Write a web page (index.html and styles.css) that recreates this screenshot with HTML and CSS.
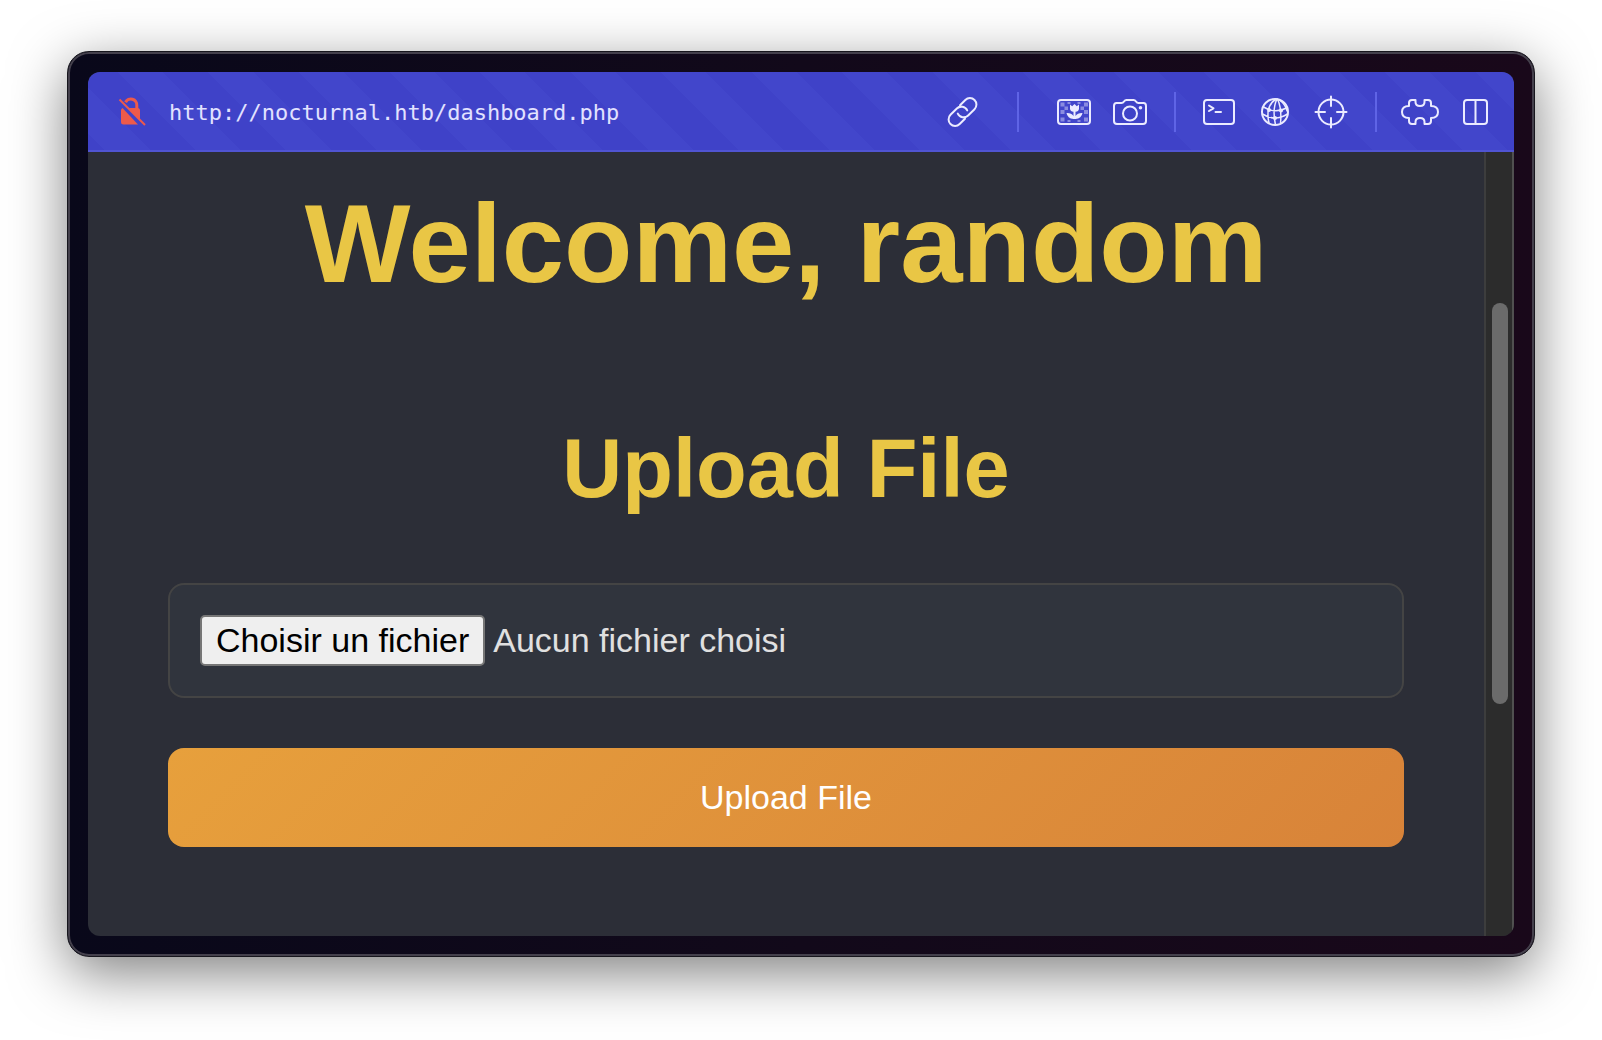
FILE: index.html
```
<!DOCTYPE html>
<html lang="fr">
<head>
<meta charset="utf-8">
<meta name="viewport" content="width=device-width, initial-scale=1">
<title>Dashboard</title>
<link rel="stylesheet" href="styles.css">
</head>
<body>
<div class="frame">
  <div class="window">
    <header class="toolbar">
      <svg class="lock" viewBox="0 0 32 32" aria-hidden="true">
        <path class="lock-shackle" d="M9.500 6.200A6 6 0 0 1 20.800 9.500V15"/>
        <path class="lock-body" d="M6.500 12L22 28.500H7.500Q5 28.500 5 26V14.500Q5 12.500 6.500 12Z"/>
        <path class="lock-body" d="M12 12H21.500Q24 12 24 14.500V24.500Z"/>
        <path class="lock-slash" d="M3.500 3.500L29 29"/>
      </svg>
      <a class="url" href="#">http://nocturnal.htb/dashboard.php</a>
      <nav class="tools" aria-label="Tools">
        <button class="tool" type="button" aria-label="Copy link">
          <svg viewBox="0 0 40 40">
            <g transform="translate(20.500 20) rotate(-45)">
              <path d="M-3 6.500H-10.500A6.500 6.500 0 0 1 -10.500 -6.500H-1.500A6.500 6.500 0 0 1 4.500 2.200"/>
              <path d="M3 -6.500H10.500A6.500 6.500 0 0 1 10.500 6.500H1.500A6.500 6.500 0 0 1 -4.500 -2.200"/>
            </g>
          </svg>
        </button>
        <span class="divider divider-wide"></span>
        <button class="tool" type="button" aria-label="Image">
          <svg viewBox="0 0 40 40">
            <path class="checks" d="M6.500 10.500h4v4h-4zM13.500 10h3v2h-3zM23.500 10h3v2h-3zM30 10.500h4v4h-4zM10.500 14.500h3.500v3.500h-3.500zM26.500 14.500h3.500v3.500h-3.500zM6.500 18h4v4h-4zM30 18h4v4h-4zM6.500 25.500h4v4h-4zM13.500 28h3v2h-3zM23.500 28h3v2h-3zM30 25.500h4v4h-4z"/>
            <rect x="4" y="8" width="32" height="24" rx="3"/>
            <path class="solid" d="M16 12.500L18.200 14.200L20.500 12L22.800 14.200L25 12.500V16.500Q25 19.500 21.500 19.800V24Q23.500 20.800 28.500 21Q27.500 26.500 21.500 27H19.500Q13.500 26.500 12.500 21Q17.500 20.800 19.500 24V19.800Q16 19.500 16 16.500Z"/>
          </svg>
        </button>
        <button class="tool" type="button" aria-label="Screenshot">
          <svg viewBox="0 0 40 40">
            <path d="M4 29V14Q4 11 6.500 11H11.500Q13 11 14 9.500T16.500 8H23.500Q25 8 26 9.500T28.500 11H33.500Q36 11 36 14V29Q36 32 33 32H7Q4 32 4 29Z"/>
            <circle cx="20" cy="21.500" r="7"/>
            <circle class="solid" cx="30.500" cy="15.800" r="1.800"/>
          </svg>
        </button>
        <span class="divider"></span>
        <button class="tool" type="button" aria-label="Console">
          <svg viewBox="0 0 40 40">
            <rect x="5" y="8" width="30" height="24" rx="3"/>
            <path d="M10 13.500L14.500 16.300L10 19M16.500 20H22"/>
          </svg>
        </button>
        <button class="tool" type="button" aria-label="Network">
          <svg viewBox="0 0 40 40">
            <circle cx="20" cy="20" r="13"/>
            <path class="thin" d="M21 7Q10 14 14 31M22 7Q17 17 20.500 33M22.500 7Q27 17 25.500 31M8.500 15Q20 22 31.500 16M7.500 22Q20 30 32.500 22M24 7.500Q31 13 32 19"/>
            <circle class="solid" cx="14" cy="18" r="2"/>
            <circle class="solid" cx="26" cy="18.500" r="2"/>
            <circle class="solid" cx="20" cy="26" r="2"/>
          </svg>
        </button>
        <button class="tool" type="button" aria-label="Inspect element">
          <svg viewBox="0 0 40 40">
            <circle cx="20" cy="20" r="12.500"/>
            <path d="M20 4.500V14M20 26V35.500M4.500 20H14M26 20H35.500"/>
          </svg>
        </button>
        <span class="divider"></span>
        <button class="tool" type="button" aria-label="Extensions">
          <svg viewBox="0 0 40 40">
            <path d="M15.500 8V10Q15.500 14 20 14T24.500 10V8H28Q31 8 31 11V14Q38 14 38 20T31 26V29Q31 32 28 32H24.500V30Q24.500 26 20 26T15.500 30V32H12Q9 32 9 29V26Q2 26 2 20T9 14V11Q9 8 12 8Z"/>
          </svg>
        </button>
        <button class="tool" type="button" aria-label="Split view">
          <svg viewBox="0 0 40 40">
            <rect x="8" y="8" width="23" height="24" rx="3"/>
            <path d="M19.500 8V32"/>
          </svg>
        </button>
      </nav>
    </header>
    <div class="viewport">
      <main class="page">
        <h1 class="title">Welcome, random</h1>
        <h2 class="subtitle">Upload File</h2>
        <form class="upload">
          <div class="file-field">
            <input class="file-input" type="file" id="upload-file">
            <label class="file-button" for="upload-file">Choisir un fichier</label>
            <span class="file-name">Aucun fichier choisi</span>
          </div>
          <button class="submit" type="submit">Upload File</button>
        </form>
      </main>
      <div class="scrollbar" aria-hidden="true"><span class="thumb"></span></div>
    </div>
  </div>
</div>
</body>
</html>
```
FILE: styles.css
```
* {
  box-sizing: border-box;
}

body {
  display: flex;
  min-height: 100vh;
  margin: 0;
  padding: 51px 67px 83px;
  background: #fff;
  font-family: "Liberation Sans", Arial, sans-serif;
}

.frame {
  display: flex;
  flex: 1;
  padding: 20px;
  border: 1px solid #17161d;
  border-radius: 22px;
  background: linear-gradient(90deg, #09081a, #12091a 50%, #19081a);
  box-shadow: inset 0 0 0 2px #44404c, 0 16px 56px rgba(0, 0, 0, 0.5);
}

.window {
  display: flex;
  flex: 1;
  flex-direction: column;
  overflow: hidden;
  border-radius: 12px;
  background: #2c2e37;
}

.toolbar {
  display: flex;
  align-items: center;
  height: 80px;
  padding: 2px 18px 0 28px;
  border-bottom: 2px solid #5054d2;
  background: repeating-linear-gradient(45deg, #3f42c8 0 12px, #4246cb 12px 44px, #3f42c8 44px 64px);
}

.lock {
  width: 32px;
  height: 32px;
  fill: none;
}

.lock-shackle {
  stroke: #ee5a4a;
  stroke-width: 3;
}

.lock-body {
  fill: #ee5a4a;
}

.lock-slash {
  stroke: #ee5a4a;
  stroke-width: 2;
}

.url {
  flex: 1;
  margin-left: 21px;
  color: #e2e2ff;
  font: 22px "DejaVu Sans Mono", monospace;
  text-decoration: none;
}

.tools {
  display: flex;
  align-items: center;
  gap: 16px;
}

.tool {
  width: 40px;
  height: 40px;
  padding: 0;
  border: 0;
  background: none;
}

.tool svg {
  display: block;
  fill: none;
  stroke: #ebebff;
  stroke-width: 2;
  stroke-linecap: round;
  stroke-linejoin: round;
}

.tool .solid {
  fill: #ebebff;
  stroke: none;
}

.tool .thin {
  stroke-width: 1.5;
}

.tool .checks {
  fill: #8a8ce0;
  stroke: none;
}

.divider {
  width: 2px;
  height: 40px;
  margin: 0 7px 0 8px;
  background: #5f64e6;
}

.divider-wide {
  margin: 0 19px;
}

.viewport {
  display: flex;
  flex: 1;
}

.page {
  flex: 1;
  padding: 28px 80px;
}

.title,
.subtitle {
  margin: 0;
  color: #e9c645;
  text-align: center;
}

.title {
  font-size: 112px;
  line-height: 128px;
}

.subtitle {
  margin-top: 113px;
  font-size: 83px;
  line-height: 96px;
}

.upload {
  display: flex;
  flex-direction: column;
  gap: 50px;
  margin-top: 66px;
  font-size: 34px;
}

.file-field {
  display: flex;
  align-items: center;
  gap: 8px;
  position: relative;
  padding: 30px;
  border: 2px solid #444;
  border-radius: 16px;
  background: #30343d;
  color: #e0e0e0;
}

.file-input {
  position: absolute;
  width: 1px;
  height: 1px;
  opacity: 0;
}

.file-button {
  padding: 0 14px;
  border: 2px solid #767676;
  border-radius: 5px;
  background: #efefef;
  color: #000;
  line-height: 47px;
}

.submit {
  height: 99px;
  border: 0;
  border-radius: 16px;
  background: linear-gradient(135deg, #e7a03c, #d88339);
  color: #fff;
  font: inherit;
}

.scrollbar {
  display: grid;
  grid-template-rows: 151fr 401fr 232fr;
  width: 30px;
  padding: 0 4px 0 6px;
  border: solid #3d3d3d;
  border-width: 0 2px;
  border-right-color: #505050;
  background: #2c2c2c;
}

.thumb {
  grid-row: 2;
  width: 16px;
  border-radius: 8px;
  background: #6b6b6b;
}
```
